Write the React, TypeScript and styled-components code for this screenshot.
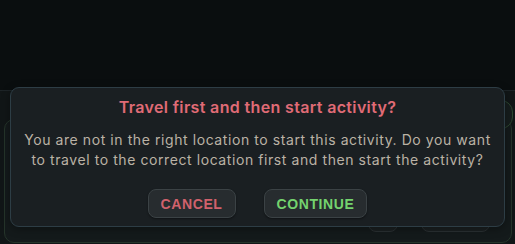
import styled, { createGlobalStyle } from "styled-components"

const Global = createGlobalStyle`
  html, body {
    margin: 0;
    padding: 0;
    background: #0a0e0f;
  }
  * { box-sizing: border-box; }
`

const Page = styled.div`
  position: relative;
  height: 244px;
  width: 515px;
  overflow: hidden;
  display: flex;
  flex-direction: column;
`

const Top = styled.div`
  height: 90px;
  background: #0a0e0f;
`

const Lower = styled.div`
  flex: 1;
  border-top: 1px solid #1d2427;
  background: #111617;
  padding: 28px 3px 1px 4px;
  display: flex;
`

const Card = styled.div`
  position: relative;
  flex: 1;
  border: 1px solid #25342a;
  border-radius: 10px;
  background: #141a1b;
  display: flex;
  justify-content: flex-end;
  align-items: flex-end;
  gap: 23px;
  padding: 0 21px 10px 0;
`

const Pill = styled.div`
  position: absolute;
  top: -20px;
  right: -2px;
  width: 60px;
  height: 29px;
  border: 1px solid #2c4630;
  border-radius: 12px;
  background: #161d1d;
`

const GhostButton = styled.div<{ w: number }>`
  width: ${p => p.w}px;
  height: 30px;
  border: 1px solid #2a3032;
  border-radius: 8px;
  background: #1a1f21;
`

const Dialog = styled.div`
  position: absolute;
  top: 87px;
  left: 10px;
  width: 495px;
  height: 140px;
  background: #1a1f22;
  border: 1px solid #2d3d45;
  border-radius: 9px;
  display: flex;
  flex-direction: column;
  align-items: center;
  padding: 8px 6px 0;
  font-family: Inter, "Noto Sans", sans-serif;
  box-shadow: 0 2px 8px rgba(0,0,0,.35);
`

const Title = styled.div`
  color: #e06b76;
  font-size: 16px;
  font-weight: 600;
  letter-spacing: 0.35px;
  line-height: 22px;
  white-space: nowrap;
`

const Body = styled.div`
  margin-top: 12px;
  color: #bab2a5;
  font-size: 14px;
  line-height: 19.5px;
  letter-spacing: 0.58px;
  text-align: center;
  white-space: nowrap;
`

const Actions = styled.div`
  margin-top: 20px;
  display: flex;
  gap: 28px;
`

const Button = styled.button<{ tone: "cancel" | "ok" }>`
  height: 29px;
  padding: 0 12px;
  background: #272c2f;
  border: 1px solid #3b4245;
  border-radius: 8px;
  font-family: "Liberation Sans", Arial, sans-serif;
  font-weight: 700;
  font-size: 14px;
  letter-spacing: 0.6px;
  color: ${p => p.tone === "cancel" ? "#d0616c" : "#74d36e"};
  box-shadow: 0 1px 2px rgba(0,0,0,.4);
`

export default function App() {
  return (
    <Page>
      <Global />
      <Top />
      <Lower>
        <Card>
          <Pill />
          <GhostButton w={30} />
          <GhostButton w={69} />
        </Card>
      </Lower>
      <Dialog>
        <Title>Travel first and then start activity?</Title>
        <Body>
          You are not in the right location to start this activity. Do you want<br />
          to travel to the correct location first and then start the activity?
        </Body>
        <Actions>
          <Button tone="cancel">CANCEL</Button>
          <Button tone="ok">CONTINUE</Button>
        </Actions>
      </Dialog>
    </Page>
  )
}
